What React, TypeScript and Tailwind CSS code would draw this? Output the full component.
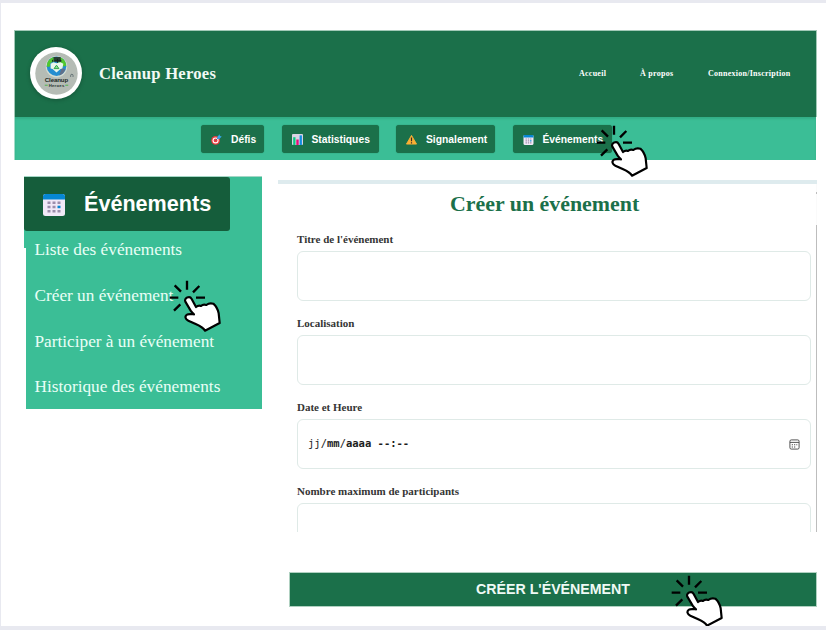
import type { ReactNode } from "react";

const serif = "font-['Liberation_Serif',serif]";
const sans = "font-['Liberation_Sans',sans-serif]";

function Pointer({ className }: { className: string }) {
  return (
    <svg viewBox="0 0 192 192" className={`absolute z-10 h-16 w-16 ${className}`} fill="none" stroke="#000">
      <path strokeWidth="7" d="M72 17v27M35 31l19 19M109 33L90 52M20 68h26M99 68h27M33 107l19-19" />
      <path
        d="M67 80C62 69 80 61 86 72L99 96C104 92 109 91 114 93C118 89 124 88 130 90C136 85 144 84 151 86C160 94 165 105 167 115L170 144L126 167C121 158 109 152 98 147L76 137C67 133 64 124 72 119C76 116 83 117 93 118Q87 113 83 107Z"
        fill="#fff"
        strokeWidth="6.500"
        strokeLinejoin="round"
      />
    </svg>
  );
}

function CalendarIcon({ className }: { className: string }) {
  return (
    <svg viewBox="0 0 22 22" className={className}>
      <rect width="22" height="22" rx="2.500" fill="#f1e9f7" />
      <path d="M0 5.500V2.500A2.500 2.500 0 0 1 2.500 0h17A2.500 2.500 0 0 1 22 2.500v3z" fill="#0687d3" />
      <g fill="#9b8eab">
        <path d="M4.500 7.500h3v2.500h-3zM9.500 7.500h3v2.500h-3zM14.500 7.500h3v2.500h-3zM4.500 11.700h3v2.500h-3zM9.500 11.700h3v2.500h-3zM4.500 16h3v2.500h-3zM9.500 16h3v2.500h-3zM14.500 16h3v2.500h-3z" />
      </g>
      <path d="M14.500 11.700h3v2.500h-3z" fill="#0687d3" />
    </svg>
  );
}

function TargetIcon() {
  return (
    <svg viewBox="0 0 12 12" className="h-[11px] w-[11px]">
      <circle cx="5" cy="7" r="4.700" fill="#f03b3f" />
      <circle cx="5" cy="7" r="3.300" fill="#fff" />
      <circle cx="5" cy="7" r="2.100" fill="#f03b3f" />
      <path d="M5 7l4-4" stroke="#37628e" strokeWidth=".9" />
      <path d="M6.800 3.200L9.400.4l.3 1.900 2 .4-2.700 2.700-2-.3z" fill="#36a9ee" />
    </svg>
  );
}

function ChartIcon() {
  return (
    <svg viewBox="0 0 12 12" className="h-[11px] w-[11px]">
      <rect width="12" height="12" rx="1" fill="#d9d4e3" />
      <path d="M1.300 3.500h2.500V12H1.300z" fill="#06c980" />
      <path d="M4.700 6h2.600v6H4.700z" fill="#e70a78" />
      <path d="M8.300 1.500h2.500V12H8.300z" fill="#118ee3" />
    </svg>
  );
}

function WarningIcon() {
  return (
    <svg viewBox="0 0 12 12" className="h-[11px] w-[11px]">
      <path d="M6 1.500L11.500 11H.5z" fill="#fbb034" stroke="#fbb034" strokeLinejoin="round" />
      <path d="M6 3.800V8M6 9v1.300" stroke="#342b27" strokeWidth="1.300" />
    </svg>
  );
}

function Logo() {
  return (
    <div className="mb-[2px] flex h-[52px] w-[52px] shrink-0 items-center justify-center rounded-full bg-white shadow-[0_1px_4px_rgba(0,0,0,0.25)]">
      <svg viewBox="0 0 44 44" className="h-[43px] w-[43px]">
        <circle cx="22" cy="22" r="21.700" fill="#b5bcb5" />
        <g transform="translate(0 -2)">
          <circle cx="22" cy="17" r="11" fill="#d3dcd2" />
          <circle cx="22" cy="16.500" r="10" fill="#248ed0" />
          <path d="M12 17c0-6 4-10 9-10l-2 5-3 1-1 4zM25 7c4 1 7 5 7 9l-4 1-4-4z" fill="#50c72d" />
          <path d="M27 18l4 2c-1 3-3 5-6 6z" fill="#60708a" />
          <path d="M19 7h7l1 5h-8z" fill="#293d35" />
          <path d="M16 14l3-1.500 3 1 4-1 3 1.500-1 5-2 .5-4 3.500-4-3.500-2-.5z" fill="#e9f6eb" />
          <path d="M22 15.500l2.500 3.500h-5z" fill="#8ce493" stroke="#2ea449" strokeWidth="1" />
          <path d="M18 10v2M23 9v4M20 11h7" stroke="#17251f" />
          <text x="22" y="33" textAnchor="middle" fontFamily="Liberation Sans" fontWeight="700" fontSize="6.300" textLength="24" fill="#1d2925">Cleanup</text>
          <text x="22" y="37.600" textAnchor="middle" fontFamily="Liberation Sans" fontWeight="700" fontSize="4.400" textLength="16" fill="#29362e">Heroes</text>
          <path d="M10 36h3M31 36h3" stroke="#4fb24c" />
          <path d="M36.500 27.500v-1.500a1.200 1.200 0 0 1 2.400 0v1.500" stroke="#4d5c63" fill="none" strokeWidth=".8" />
        </g>
      </svg>
    </div>
  );
}

function Tab({ icon, label, className }: { icon: ReactNode; label: string; className: string }) {
  return (
    <button className={`flex h-7 shrink-0 items-center rounded-[3px] bg-[#1b704a] pl-[10px] text-[10.300px] font-bold text-white shadow-[0_0_1px_#1b704a] ${sans} ${className}`}>
      <span className="mt-[2px]">{icon}</span>
      <span className="mt-[2px] ml-[9px] whitespace-nowrap">{label}</span>
    </button>
  );
}

function Field({ label, children }: { label: string; children?: ReactNode }) {
  return (
    <div className="mb-[15px]">
      <label className={`block h-[19px] text-[11px] leading-[14px] font-bold whitespace-nowrap text-[#353535] ${serif}`}>{label}</label>
      <div className="flex h-[50px] items-center justify-between rounded-[6px] border border-[#dfeae7] pr-[10px] pl-[9px]">{children}</div>
    </div>
  );
}

export default function App() {
  return (
    <div className="relative flex h-[630px] w-[826px] flex-col overflow-hidden border-t-[3px] border-b-4 border-l border-[#e8e9f0] bg-white pt-[27px] pl-[13px]">
      <header className="h-[87px] w-[803px] shrink-0 border-t border-r border-l border-[#a2c9b7] bg-[#1b704a]">
        <div className="flex h-full items-center pl-[15px]">
          <Logo />
          <h1 className={`ml-[17px] w-[120px] text-[16.600px] font-bold tracking-[0.26px] whitespace-nowrap text-[#f2faf5] ${serif}`}>Cleanup Heroes</h1>
          <nav className={`ml-auto flex pr-[25px] text-[8px] font-bold tracking-[0.260px] whitespace-nowrap text-white ${serif}`}>
            <a className="w-[61px]">Accueil</a>
            <a className="w-[68px]">À propos</a>
            <a className="w-[83px]">Connexion/Inscription</a>
          </nav>
        </div>
      </header>
      <div className="flex h-[43px] w-[802px] shrink-0 items-center gap-[17.500px] border-l border-[#a2dcc9] bg-[#3bbe96] pl-[186px] shadow-[inset_0_2px_2px_rgba(27,112,74,0.2)]">
        <Tab icon={<TargetIcon />} label="Défis" className="w-[63px]" />
        <Tab icon={<ChartIcon />} label="Statistiques" className="w-[97px]" />
        <Tab icon={<WarningIcon />} label="Signalement" className="w-[99px]" />
        <Tab icon={<CalendarIcon className="h-[10px] w-[11px]" />} label="Événements" className="w-[99px]" />
      </div>
      <main className="flex shrink-0 pt-[16px]">
        <aside className="ml-[10px] h-[233px] w-[238px] shrink-0 border-t border-[#a4d7c6] bg-[linear-gradient(90deg,transparent_2px,#3bbe96_2px),linear-gradient(180deg,#3bbe96_71px,#fff_71px)]">
          <div className={`flex h-[54px] w-[206px] items-center rounded-r-[3px] rounded-bl-[3px] bg-[#155d3b] pl-[19px] text-[21.600px] font-bold text-white ${sans}`}>
            <CalendarIcon className="mt-[2px] h-[22px] w-[22px]" />
            <span className="ml-[19px] whitespace-nowrap">Événements</span>
          </div>
          <nav className={`flex flex-col pl-[10.500px] text-[17.250px] leading-[37px] whitespace-nowrap text-[#eafff6] ${serif}`}>
            <a className="h-[46px]">Liste des événements</a>
            <a className="h-[46px]">Créer un événement</a>
            <a className="h-[45px]">Participer à un événement</a>
            <a>Historique des événements</a>
          </nav>
        </aside>
        <section className="mt-[4px] ml-4 flex h-[352px] w-[539px] shrink-0 overflow-hidden border-t-4 border-[#deebee] pl-[19px]">
          <div className="w-[519px] shrink-0">
            <h2 className={`pt-[4px] pl-[153px] text-[21.900px] leading-[32px] font-bold whitespace-nowrap text-[#1b704a] ${serif}`}>Créer un événement</h2>
            <div className="mt-[12px] w-[514px]">
              <Field label="Titre de l'événement" />
              <Field label="Localisation" />
              <Field label="Date et Heure">
                <span className="ml-px font-['DejaVu_Sans_Mono',monospace] text-[10.500px] whitespace-pre text-[#1d1d1d]">
                  jj/<b>mm</b>/<b>aaaa</b> <b>--:--</b>
                </span>
                <svg viewBox="0 0 12 12" className="h-[11px] w-[11px]" fill="none" stroke="#444">
                  <rect x="1" y="1" width="10" height="10" rx="1.500" />
                  <path d="M1 3.700h10" />
                  <path d="M3 6.200h6M3 8.700h4" strokeWidth="1.200" strokeDasharray="1.300 1.200" />
                </svg>
              </Field>
              <Field label="Nombre maximum de participants" />
            </div>
          </div>
          <div className="flex w-px flex-col bg-[#fafafa]">
            <span className="mt-[8px] h-[2px] bg-[#bdbdbd]" />
            <span className="mt-[31px] flex-1 bg-[#bdbdbd]" />
          </div>
        </section>
      </main>
      <button className={`mt-[40px] ml-[275px] h-[35px] w-[528px] shrink-0 border border-[#b0d1c1] bg-[#1b704a] pt-px text-[14.200px] font-bold text-[#effaf5] ${sans}`}>CRÉER L'ÉVÉNEMENT</button>
      <Pointer className="top-[117px] left-[589px]" />
      <Pointer className="top-[272px] left-[162px]" />
      <Pointer className="top-[567px] left-[664px]" />
    </div>
  );
}
